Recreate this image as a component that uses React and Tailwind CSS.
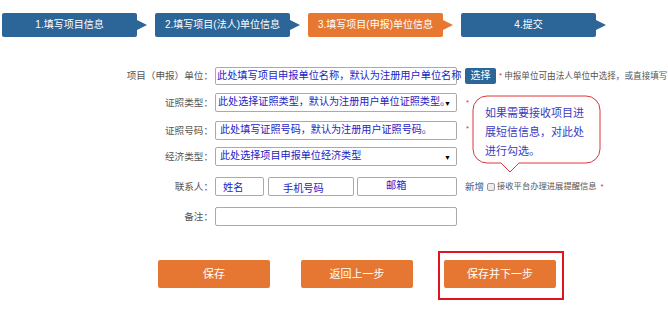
import React from 'react'

const steps = [
    { label: '1.填写项目信息', active: false },
    { label: '2.填写项目(法人)单位信息', active: false },
    { label: '3.填写项目(申报)单位信息', active: true },
    { label: '4.提交', active: false },
]

function Step({ label, active, first }) {
    return (
        <div className={`flex items-center ${first ? '' : 'ml-[8px]'}`}>
            <div
                className={`${active ? 'bg-[#e77832]' : 'bg-[#2c6597]'} w-[135px] h-[24px] rounded-[2px] flex items-center justify-center text-white text-[10px] leading-none`}
            >
                {label}
            </div>
            <div
                className={`w-0 h-0 border-y-[5px] border-y-transparent border-l-[10px] ${active ? 'border-l-[#e77832]' : 'border-l-[#2c6597]'}`}
            ></div>
        </div>
    )
}

function Label({ children }) {
    return <div className="w-[213px] text-right text-[9.6px] leading-none text-[#555]">{children}</div>
}

function Arrow() {
    return <span className="absolute right-[5px] top-1/2 -translate-y-1/2 text-[7px] leading-none text-black">▼</span>
}

export default function App() {
    return (
        <div className="relative w-[668px] h-[311px] overflow-hidden bg-white font-['Liberation_Sans','Noto_Sans_CJK_SC',sans-serif]">
            {/* steps */}
            <div className="flex pt-[13px] pl-[2px]">
                {steps.map((s, i) => (
                    <Step key={s.label} label={s.label} active={s.active} first={i === 0} />
                ))}
            </div>

            {/* form */}
            <div className="flex items-center mt-[30px] h-[18px]">
                <Label>项目（申报）单位：</Label>
                <div className="ml-[2px] w-[242px] h-[18px] border border-[#aaa] rounded-[2px] flex items-center pl-[1px]">
                    <span className="whitespace-nowrap text-[10.2px] leading-none text-[#2323c4]">此处填写项目申报单位名称，默认为注册用户单位名称</span>
                </div>
                <div className="ml-[8px] w-[31px] h-[16px] bg-[#2c6597] rounded-[2px] text-white text-[10px] leading-none flex items-center justify-center">选择</div>
                <span className="ml-[3px] text-[#e0353b] text-[8px] leading-none">*</span>
                <span className="ml-[2px] whitespace-nowrap text-[8.6px] leading-none text-[#555]">申报单位可由法人单位中选择，或直接填写</span>
            </div>

            <div className="flex items-center mt-[8px] h-[19px]">
                <Label>证照类型：</Label>
                <div className="relative ml-[2px] w-[242px] h-[19px] border border-[#aaa] rounded-[2px] flex items-center pl-[2px]">
                    <span className="whitespace-nowrap text-[10.1px] leading-none text-[#2323c4]">此处选择证照类型，默认为注册用户单位证照类型。</span>
                    <Arrow />
                </div>
                <span className="ml-[9px] text-[#e0353b] text-[8px] leading-none">*</span>
            </div>

            <div className="flex items-center mt-[9px] h-[19px]">
                <Label>证照号码：</Label>
                <div className="ml-[2px] w-[242px] h-[19px] border border-[#aaa] rounded-[2px] flex items-center pl-[4px]">
                    <span className="whitespace-nowrap text-[10.1px] leading-none text-[#2323c4]">此处填写证照号码，默认为注册用户证照号码。</span>
                </div>
                <span className="ml-[9px] mb-[3px] text-[#e0353b] text-[8px] leading-none">*</span>
            </div>

            <div className="flex items-center mt-[7px] h-[19px]">
                <Label>经济类型：</Label>
                <div className="relative ml-[2px] w-[242px] h-[19px] border border-[#aaa] rounded-[2px] flex items-center pl-[4px]">
                    <span className="whitespace-nowrap text-[10.1px] leading-none text-[#2323c4]">此处选择项目申报单位经济类型</span>
                    <Arrow />
                </div>
            </div>

            <div className="flex items-center mt-[11px] h-[19px]">
                <Label>联系人：</Label>
                <div className="ml-[2px] w-[49px] h-[19px] border border-[#aaa] rounded-[2px] flex items-end pb-[2px] pl-[7px]">
                    <span className="text-[10.2px] leading-none text-[#2323c4]">姓名</span>
                </div>
                <div className="ml-[4px] w-[86px] h-[19px] border border-[#aaa] rounded-[2px] flex items-end pb-[1px] pl-[14px]">
                    <span className="text-[10.2px] leading-none text-[#2323c4]">手机号码</span>
                </div>
                <div className="ml-[3px] w-[100px] h-[19px] border border-[#aaa] rounded-[2px] flex items-center pl-[28px]">
                    <span className="text-[10.2px] leading-none text-[#2323c4]">邮箱</span>
                </div>
                <span className="ml-[8px] text-[9.5px] leading-none text-[#2c6597]">新增</span>
                <span className="ml-[3px] w-[8px] h-[8px] border border-[#999] rounded-[2px] bg-[#eee]"></span>
                <span className="ml-[2px] whitespace-nowrap text-[8.3px] leading-none text-[#555]">接收平台办理进展提醒信息</span>
                <span className="ml-[4px] text-[#e0353b] text-[8px] leading-none">*</span>
            </div>

            <div className="flex items-center mt-[11px] h-[19px]">
                <Label>备注：</Label>
                <div className="ml-[2px] w-[242px] h-[19px] border border-[#aaa] rounded-[2px]"></div>
            </div>

            {/* buttons */}
            <div className="flex items-start mt-[25px] pl-[158px]">
                <div className="mt-[9px] w-[112px] h-[28px] bg-[#e67733] rounded-[2px] text-white text-[11px] leading-none flex items-center justify-center">保存</div>
                <div className="ml-[31px] mt-[9px] w-[112px] h-[28px] bg-[#e67733] rounded-[2px] text-white text-[11px] leading-none flex items-center justify-center">返回上一步</div>
                <div className="ml-[25px] border-2 border-[#e0141e] pt-[7px] pb-[10px] pl-[4px] pr-[6px]">
                    <div className="w-[112px] h-[28px] bg-[#e67733] rounded-[2px] text-white text-[11px] leading-none flex items-center justify-center">保存并下一步</div>
                </div>
            </div>

            {/* callout bubble */}
            <div className="absolute left-[472px] top-[95px] w-[130px] h-[80px]">
                <svg className="absolute inset-0" width="130" height="80" viewBox="0 0 130 80">
                    <path
                        d="M15,1 H114 A14,14 0 0 1 128,15 V54 A14,14 0 0 1 114,68 H47 L38,77 L29,68 H15 A14,14 0 0 1 1,54 V15 A14,14 0 0 1 15,1 Z"
                        fill="white"
                        stroke="#e0353b"
                        strokeWidth="1"
                    />
                </svg>
                <div className="relative pl-[13px] pt-[9px] text-[11px] leading-[19px] text-[#3b3bc0]">
                    <div>如果需要接收项目进</div>
                    <div>展短信信息，对此处</div>
                    <div>进行勾选。</div>
                </div>
            </div>
        </div>
    )
}
